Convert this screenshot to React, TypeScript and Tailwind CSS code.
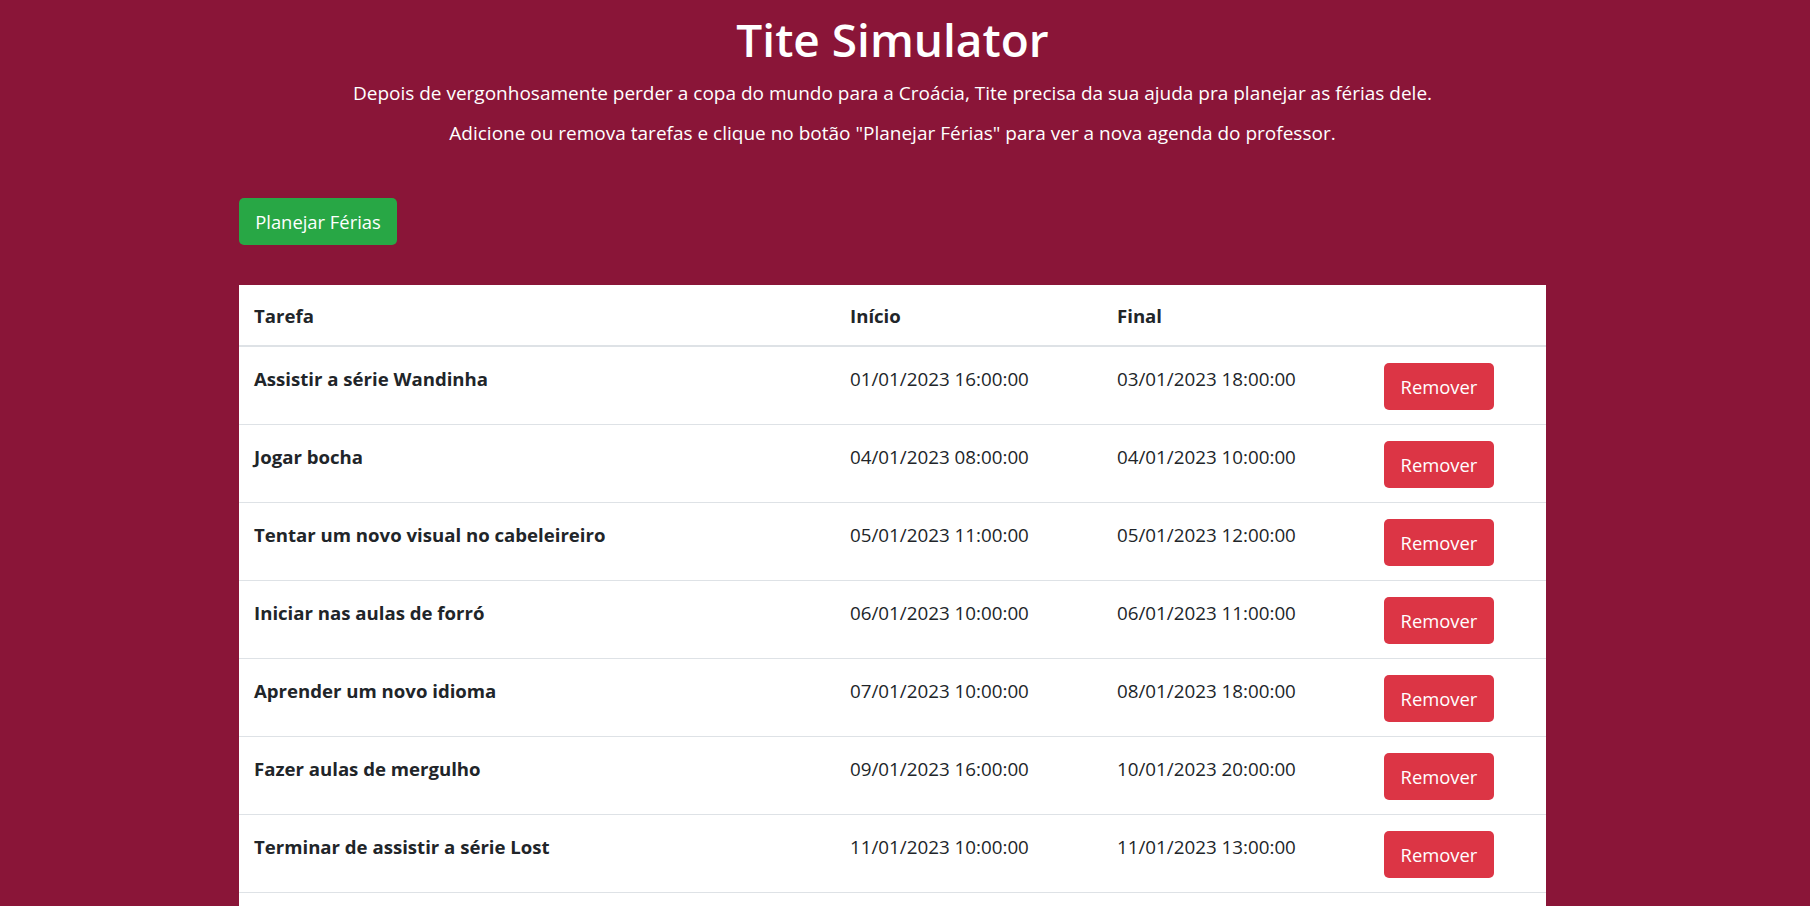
import React from "react";

interface Task {
  id: number;
  name: string;
  start: string;
  end: string;
}

const tasks: Task[] = [
  { id: 1, name: "Assistir a série Wandinha", start: "01/01/2023 16:00:00", end: "03/01/2023 18:00:00" },
  { id: 2, name: "Jogar bocha", start: "04/01/2023 08:00:00", end: "04/01/2023 10:00:00" },
  { id: 3, name: "Tentar um novo visual no cabeleireiro", start: "05/01/2023 11:00:00", end: "05/01/2023 12:00:00" },
  { id: 4, name: "Iniciar nas aulas de forró", start: "06/01/2023 10:00:00", end: "06/01/2023 11:00:00" },
  { id: 5, name: "Aprender um novo idioma", start: "07/01/2023 10:00:00", end: "08/01/2023 18:00:00" },
  { id: 6, name: "Fazer aulas de mergulho", start: "09/01/2023 16:00:00", end: "10/01/2023 20:00:00" },
  { id: 7, name: "Terminar de assistir a série Lost", start: "11/01/2023 10:00:00", end: "11/01/2023 13:00:00" },
  { id: 8, name: "Visitar a família em Caxias do Sul", start: "12/01/2023 09:00:00", end: "14/01/2023 18:00:00" },
];

const cols = "grid grid-cols-[596px_267px_267px_177px]";

export default function App() {
  return (
    <div className="min-h-screen bg-[#8a1538] font-['Open_Sans','Noto_Sans',sans-serif] text-white">
      <div className="ml-[239px] w-[1307px]">
        {/* Header */}
        <header className="pt-[9px] text-center">
          <h1 className="text-[46px] font-semibold leading-[60px]">Tite Simulator</h1>
          <p className="mt-[6px] text-[19px] leading-[37px]">
            Depois de vergonhosamente perder a copa do mundo para a Croácia, Tite precisa da sua ajuda pra planejar as férias dele.
          </p>
          <p className="mt-[3px] text-[19px] leading-[37px]">
            Adicione ou remova tarefas e clique no botão "Planejar Férias" para ver a nova agenda do professor.
          </p>
        </header>

        <button className="mt-[46px] flex h-[47px] w-[158px] items-center justify-center rounded-[5px] bg-[#28a745] text-[18.4px] leading-[30px] text-white">
          Planejar Férias
        </button>

        {/* Table */}
        <div className="mt-[40px] bg-white text-[18.6px] leading-[30px] text-[#212529]">
          <div className={`${cols} h-[62px] border-b-2 border-[#dee2e6] font-bold`}>
            <div className="px-[15px] pt-[16px]">Tarefa</div>
            <div className="px-[15px] pt-[16px]">Início</div>
            <div className="px-[15px] pt-[16px]">Final</div>
            <div className="px-[15px] pt-[16px]"></div>
          </div>
          {tasks.map((t) => (
            <div key={t.id} className={`${cols} h-[78px] border-b border-[#dee2e6]`}>
              <div className="px-[15px] pt-[17px] font-bold">{t.name}</div>
              <div className="px-[15px] pt-[17px] text-[18.8px]">{t.start}</div>
              <div className="px-[15px] pt-[17px] text-[18.8px]">{t.end}</div>
              <div className="px-[15px] pt-[16px]">
                <button className="flex h-[47px] w-[110px] items-center justify-center rounded-[5px] bg-[#dc3545] text-[18.4px] text-white">
                  Remover
                </button>
              </div>
            </div>
          ))}
        </div>
      </div>
    </div>
  );
}
